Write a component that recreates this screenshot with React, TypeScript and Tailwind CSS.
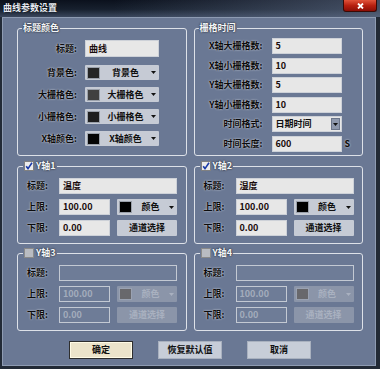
import React from "react";

const LBL =
  "text-[9px] leading-[12px] font-bold text-[#0c0c0c] [text-shadow:0_0_2px_rgba(255,255,255,0.85)] whitespace-nowrap";
const LEG =
  "text-[9px] leading-[12px] font-bold text-[#f4f6f8] [text-shadow:0_0_2px_rgba(0,0,0,0.9)] whitespace-nowrap";

function Arrow({ color = "#111" }: { color?: string }) {
  return (
    <svg width="5" height="3" viewBox="0 0 5 3" className="shrink-0">
      <path d="M0 0 H5 L2.5 3 Z" fill={color} />
    </svg>
  );
}

function CheckBox({ checked }: { checked: boolean }) {
  return (
    <span
      className={
        checked
          ? "flex w-[10px] h-[10px] border border-[#808080] bg-[#ececec] items-center justify-center"
          : "flex w-[10px] h-[10px] border border-[#8a8a8a] bg-[#b9bcc2] items-center justify-center"
      }
    >
      {checked && (
        <svg width="8" height="8" viewBox="0 0 8 8">
          <path d="M1.2 4.2 L3 6.6 L7 0.8" stroke="#1a3aa8" strokeWidth="1.6" fill="none" />
        </svg>
      )}
    </span>
  );
}

function TextBox({ value, className, disabled }: { value: string; className: string; disabled?: boolean }) {
  return (
    <div
      className={
        (disabled
          ? "bg-[#6e7c97] border border-[#c3c9d3] text-[#a3acbc] "
          : "bg-[#e7e7e7] border border-[#cdd1d8] text-[#1a0c0c] ") +
        "flex items-center pl-[3px] text-[9px] leading-[12px] font-bold " +
        className
      }
    >
      {value}
    </div>
  );
}

function ColorCombo({
  swatch,
  text,
  className,
  disabled,
}: {
  swatch: string;
  text: string;
  className: string;
  disabled?: boolean;
}) {
  return (
    <div
      className={
        (disabled ? "bg-[#8b95a9] " : "bg-[#c6cbd5] ") +
        "flex items-center pl-[2px] pr-[3px] rounded-[1px] " +
        className
      }
    >
      <span
        className={
          disabled
            ? "w-[13px] h-[12px] bg-[#68686c] border border-[#9aa2b2] shrink-0"
            : "w-[13px] h-[12px] border border-[#9aa0aa] shrink-0"
        }
        style={disabled ? undefined : { backgroundColor: swatch }}
      />
      <span
        className={
          "flex-1 text-center text-[9px] leading-[12px] font-bold " +
          (disabled ? "text-[#a9b1c0]" : "text-[#101010]")
        }
      >
        {text}
      </span>
      <Arrow color={disabled ? "#a9b1c0" : "#111"} />
    </div>
  );
}

function Btn({ text, className, disabled }: { text: string; className: string; disabled?: boolean }) {
  return (
    <div
      className={
        (disabled ? "bg-[#8b95a9] text-[#a9b1c0] " : "bg-[#c6cbd5] text-[#101010] ") +
        "flex items-center justify-center text-[9px] leading-[12px] font-bold rounded-[1px] " +
        className
      }
    >
      {text}
    </div>
  );
}

function YGroup({ n, checked, title }: { n: number; checked: boolean; title: string }) {
  const dis = !checked;
  return (
    <fieldset className="border border-[#dde1e8] rounded-[3px] h-[84px] min-w-0">
      <legend className="ml-[5px] px-[1px] h-[12px] text-[9px] leading-[12px]">
        <div className="flex items-center gap-[2px] h-[12px]">
          <CheckBox checked={checked} />
          <span className={LEG}>Y轴{n}</span>
        </div>
      </legend>
      <div className="pt-[6px] flex flex-col gap-[5px]">
        <div className="flex items-center">
          <span className={LBL + " w-[41px] pl-[9px]"}>标题:</span>
          <TextBox value={title} disabled={dis} className="w-[118px] h-[16px]" />
        </div>
        <div className="flex items-center">
          <span className={LBL + " w-[41px] pl-[9px]"}>上限:</span>
          <TextBox value="100.00" disabled={dis} className="w-[51px] h-[16px]" />
          <ColorCombo swatch="#000" text="颜色" disabled={dis} className="ml-[7px] w-[60px] h-[16px]" />
        </div>
        <div className="flex items-center">
          <span className={LBL + " w-[41px] pl-[9px]"}>下限:</span>
          <TextBox value="0.00" disabled={dis} className="w-[51px] h-[16px]" />
          <Btn text="通道选择" disabled={dis} className="ml-[7px] w-[60px] h-[16px]" />
        </div>
      </div>
    </fieldset>
  );
}

export default function App() {
  const g1 = [
    { l: "背景色:", s: "#252525", t: "背景色" },
    { l: "大栅格色:", s: "#404040", t: "大栅格色" },
    { l: "小栅格色:", s: "#1e1e1e", t: "小栅格色" },
    { l: "X轴颜色:", s: "#050505", t: "X轴颜色" },
  ];
  const g2 = [
    { l: "X轴大栅格数:", v: "5" },
    { l: "X轴小栅格数:", v: "10" },
    { l: "Y轴大栅格数:", v: "5" },
    { l: "Y轴小栅格数:", v: "10" },
  ];
  return (
    <div className="w-[380px] h-[369px] bg-[#222a36] flex flex-col overflow-hidden font-['Noto_Sans_CJK_SC','Noto_Sans',sans-serif] select-none">
      <div className="h-[17px] shrink-0 flex items-start justify-between bg-[linear-gradient(90deg,rgba(0,0,0,0)_30%,rgba(100,114,140,0.6)_100%),linear-gradient(180deg,#0b111d_0%,#17202e_55%,#3a465c_100%)]">
        <span className="pl-[3px] pt-[1px] text-[9px] leading-[13px] font-bold text-[#e6ebf2] [text-shadow:0_0_2px_rgba(0,0,0,0.9)]">
          曲线参数设置
        </span>
        <div className="mr-[3px] w-[34px] h-[12px] flex items-center justify-center rounded-b-[3px] border border-t-0 border-[#3a0a06] bg-[linear-gradient(180deg,#e2533a_0%,#b72010_50%,#8c0e06_100%)]">
          <svg width="7" height="6" viewBox="0 0 7 6">
            <path d="M1 0.5 L6 5.5 M6 0.5 L1 5.5" stroke="#ffffff" strokeWidth="1.8" />
          </svg>
        </div>
      </div>
      <div className="flex-1 ml-[2px] mr-[4px] mb-[3px] bg-[#6a7894] border border-[#8e9bb2] pl-[14px] pr-[12px] pt-[4px] flex flex-col">
        <div className="grid grid-cols-2 gap-x-[7px]">
          <fieldset className="border border-[#dde1e8] rounded-[3px] h-[134px] min-w-0">
            <legend className={LEG + " ml-[4px] px-[1px] h-[12px]"}>标题颜色</legend>
            <div className="pt-[6px] flex flex-col">
              <div className="flex items-center">
                <span className={LBL + " w-[59px] text-right"}>标题:</span>
                <TextBox value="曲线" className="ml-[8px] w-[74px] h-[17px]" />
              </div>
              <div className="mt-[8px] flex flex-col gap-[7px]">
                {g1.map((r) => (
                  <div key={r.l} className="flex items-center">
                    <span className={LBL + " w-[59px] text-right"}>{r.l}</span>
                    <ColorCombo swatch={r.s} text={r.t} className="ml-[8px] w-[74px] h-[15px]" />
                  </div>
                ))}
              </div>
            </div>
          </fieldset>
          <fieldset className="border border-[#dde1e8] rounded-[3px] h-[134px] min-w-0">
            <legend className={LEG + " ml-[4px] px-[1px] h-[12px]"}>栅格时间</legend>
            <div className="pt-[4px] flex flex-col gap-[3.5px]">
              {g2.map((r) => (
                <div key={r.l} className="flex items-center">
                  <span className={LBL + " w-[68px] text-right"}>{r.l}</span>
                  <TextBox value={r.v} className="ml-[9px] w-[70px] h-[16px]" />
                </div>
              ))}
              <div className="flex items-center">
                <span className={LBL + " w-[68px] text-right"}>时间格式:</span>
                <div className="ml-[9px] w-[70px] h-[16px] bg-[#e7e7e7] border border-[#cdd1d8] flex items-center pl-[3px] pr-[1px]">
                  <span className="flex-1 text-[9px] leading-[12px] font-bold text-[#101010]">日期时间</span>
                  <span className="w-[9px] h-[12px] bg-[#8f99ad] border border-[#6c768a] flex items-center justify-center">
                    <Arrow />
                  </span>
                </div>
              </div>
              <div className="flex items-center">
                <span className={LBL + " w-[68px] text-right"}>时间长度:</span>
                <TextBox value="600" className="ml-[9px] w-[70px] h-[16px]" />
                <span className={LBL + " ml-[3px]"}>S</span>
              </div>
            </div>
          </fieldset>
        </div>
        <div className="mt-[4px] grid grid-cols-2 gap-x-[7px]">
          <YGroup n={1} checked title="温度" />
          <YGroup n={2} checked title="湿度" />
        </div>
        <div className="mt-[3px] grid grid-cols-2 gap-x-[7px]">
          <YGroup n={3} checked={false} title="" />
          <YGroup n={4} checked={false} title="" />
        </div>
        <div className="mt-[10px] flex justify-center gap-[25px]">
          <div className="w-[64px] h-[18px] bg-[#ece4cb] border border-[#2e2e2e] shadow-[inset_0_0_0_1px_#fffbe6] flex items-center justify-center text-[9px] leading-[12px] font-bold text-[#101010]">
            确定
          </div>
          <div className="w-[64px] h-[18px] bg-[#c7cdd8] border border-[#a9b1bf] flex items-center justify-center text-[9px] leading-[12px] font-bold text-[#101010]">
            恢复默认值
          </div>
          <div className="w-[64px] h-[18px] bg-[#c7cdd8] border border-[#a9b1bf] flex items-center justify-center text-[9px] leading-[12px] font-bold text-[#101010]">
            取消
          </div>
        </div>
      </div>
    </div>
  );
}
